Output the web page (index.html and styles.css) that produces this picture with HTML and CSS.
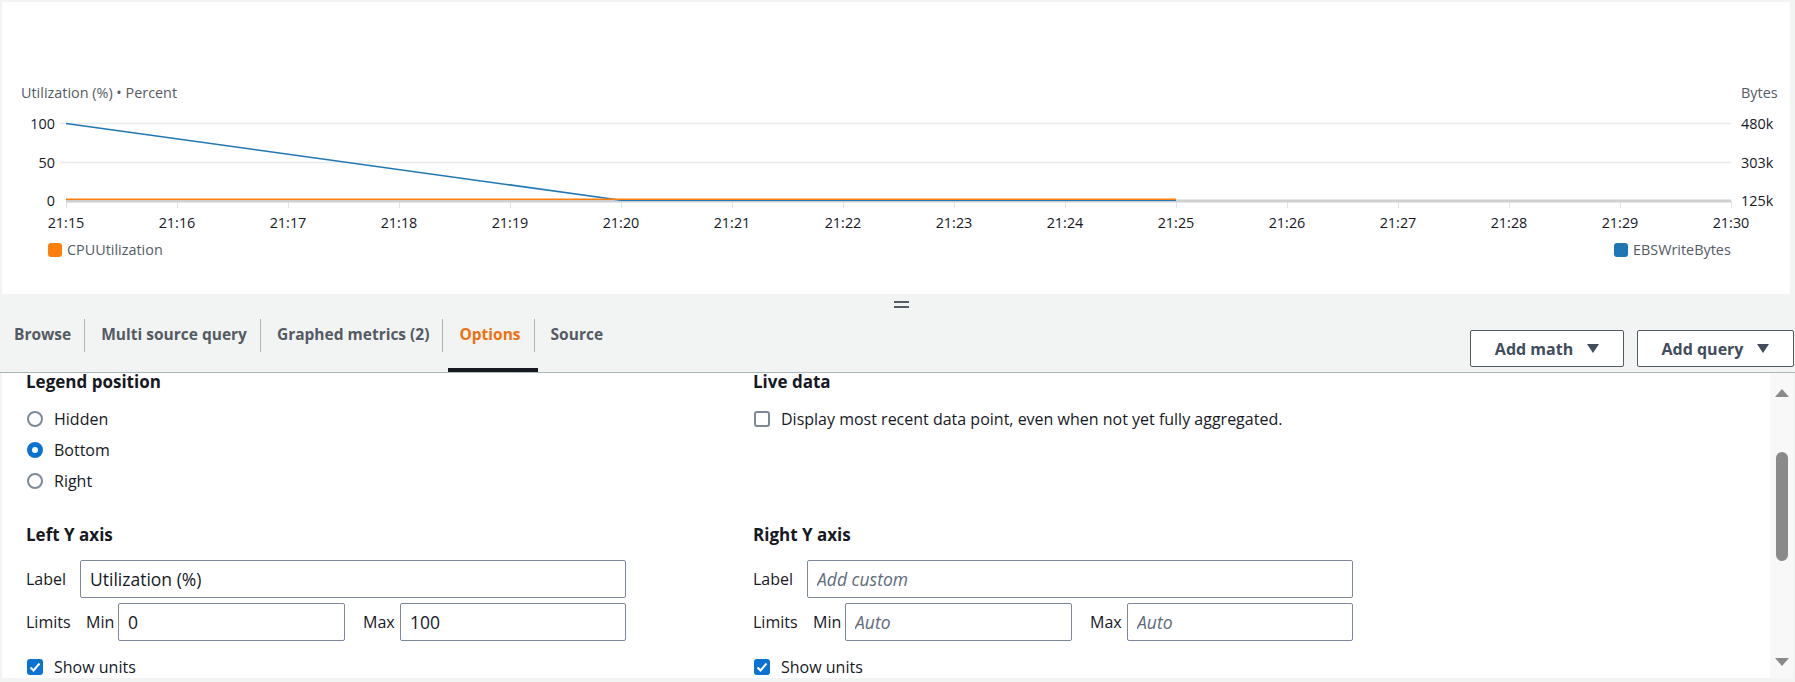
FILE: index.html
```html
<!DOCTYPE html>
<html lang="en">
<head>
<meta charset="utf-8">
<title>Metrics graph options</title>
<link rel="stylesheet" href="styles.css">
</head>
<body>
<div class="page">
  <section class="chart">
    <svg class="chart-svg" width="1788" height="292" viewBox="2 2 1788 292" xmlns="http://www.w3.org/2000/svg">
      <text class="axis-title" x="21" y="97.5">Utilization (%) • Percent</text>
      <text class="axis-title" x="1741" y="97.5">Bytes</text>

      <line class="grid" x1="60" y1="123.5" x2="1731" y2="123.5"/>
      <line class="grid" x1="60" y1="162.5" x2="1731" y2="162.5"/>

      <text class="axis-label" x="55" y="128.5" text-anchor="end">100</text>
      <text class="axis-label" x="55" y="167.5" text-anchor="end">50</text>
      <text class="axis-label" x="55" y="205.5" text-anchor="end">0</text>
      <text class="axis-label" x="1741" y="128.5">480k</text>
      <text class="axis-label" x="1741" y="167.5">303k</text>
      <text class="axis-label" x="1741" y="205.5">125k</text>

      <g class="ticks">
        <line x1="66.5" y1="201" x2="66.5" y2="208"/>
        <line x1="177.5" y1="201" x2="177.5" y2="208"/>
        <line x1="288.5" y1="201" x2="288.5" y2="208"/>
        <line x1="399.5" y1="201" x2="399.5" y2="208"/>
        <line x1="510.5" y1="201" x2="510.5" y2="208"/>
        <line x1="621.5" y1="201" x2="621.5" y2="208"/>
        <line x1="732.5" y1="201" x2="732.5" y2="208"/>
        <line x1="843.5" y1="201" x2="843.5" y2="208"/>
        <line x1="954.5" y1="201" x2="954.5" y2="208"/>
        <line x1="1065.5" y1="201" x2="1065.5" y2="208"/>
        <line x1="1176.5" y1="201" x2="1176.5" y2="208"/>
        <line x1="1287.5" y1="201" x2="1287.5" y2="208"/>
        <line x1="1398.5" y1="201" x2="1398.5" y2="208"/>
        <line x1="1509.5" y1="201" x2="1509.5" y2="208"/>
        <line x1="1620.5" y1="201" x2="1620.5" y2="208"/>
        <line x1="1731.5" y1="201" x2="1731.5" y2="208"/>
      </g>
      <line class="axis" x1="66" y1="201" x2="1731" y2="201"/>

      <g class="axis-label" text-anchor="middle">
        <text x="66" y="227.5">21:15</text>
        <text x="177" y="227.5">21:16</text>
        <text x="288" y="227.5">21:17</text>
        <text x="399" y="227.5">21:18</text>
        <text x="510" y="227.5">21:19</text>
        <text x="621" y="227.5">21:20</text>
        <text x="732" y="227.5">21:21</text>
        <text x="843" y="227.5">21:22</text>
        <text x="954" y="227.5">21:23</text>
        <text x="1065" y="227.5">21:24</text>
        <text x="1176" y="227.5">21:25</text>
        <text x="1287" y="227.5">21:26</text>
        <text x="1398" y="227.5">21:27</text>
        <text x="1509" y="227.5">21:28</text>
        <text x="1620" y="227.5">21:29</text>
        <text x="1731" y="227.5">21:30</text>
      </g>

      <polyline class="series-blue" points="66,123.5 621,200.3 1176,200.3"/>
      <polyline class="series-orange" points="66,199.3 1176,199.3"/>

      <rect class="swatch-orange" x="48" y="243" width="14" height="14" rx="3"/>
      <text class="legend-text" x="67" y="255">CPUUtilization</text>
      <rect class="swatch-blue" x="1614" y="243" width="14" height="14" rx="3"/>
      <text class="legend-text" x="1633" y="255">EBSWriteBytes</text>
    </svg>
  </section>

  <section class="panel">
    <div class="handle"><span class="handle-bar"></span><span class="handle-bar"></span></div>
    <div class="panel-bar">
      <ul class="tabs">
        <li class="tab"><span class="tab-label">Browse</span></li>
        <li class="tab"><span class="tab-label">Multi source query</span></li>
        <li class="tab"><span class="tab-label">Graphed metrics (2)</span></li>
        <li class="tab tab-active"><span class="tab-label">Options</span></li>
        <li class="tab"><span class="tab-label">Source</span></li>
      </ul>
      <div class="actions">
        <button class="btn btn-math" type="button">Add math <span class="caret"></span></button>
        <button class="btn btn-query" type="button">Add query <span class="caret"></span></button>
      </div>
    </div>
  </section>

  <section class="options">
    <div class="options-body">
      <div class="group">
        <h3 class="group-title">Legend position</h3>
        <div class="choice-list">
          <div class="choice"><span class="radio"></span><span>Hidden</span></div>
          <div class="choice"><span class="radio radio-checked"></span><span>Bottom</span></div>
          <div class="choice"><span class="radio"></span><span>Right</span></div>
        </div>
      </div>
      <div class="group">
        <h3 class="group-title">Live data</h3>
        <div class="choice-list">
          <div class="choice"><span class="checkbox"></span><span>Display most recent data point, even when not yet fully aggregated.</span></div>
        </div>
      </div>

      <div class="group group-axis">
        <h3 class="group-title">Left Y axis</h3>
        <div class="field-row label-row">
          <span class="field-label">Label</span>
          <input class="text-input" type="text" value="Utilization (%)">
        </div>
        <div class="field-row limits-row">
          <span class="field-label">Limits</span>
          <span class="field-label">Min</span>
          <input class="text-input" type="text" value="0">
          <span class="field-label max-label">Max</span>
          <input class="text-input" type="text" value="100">
        </div>
        <div class="choice units-row">
          <span class="checkbox checkbox-checked"><svg viewBox="0 0 16 16" width="16" height="16"><path d="M3.5 8.5 L6.5 11.5 L12.5 4.5" fill="none" stroke="#fff" stroke-width="2"/></svg></span><span>Show units</span>
        </div>
      </div>
      <div class="group group-axis">
        <h3 class="group-title">Right Y axis</h3>
        <div class="field-row label-row">
          <span class="field-label">Label</span>
          <input class="text-input" type="text" placeholder="Add custom">
        </div>
        <div class="field-row limits-row">
          <span class="field-label">Limits</span>
          <span class="field-label">Min</span>
          <input class="text-input" type="text" placeholder="Auto">
          <span class="field-label max-label">Max</span>
          <input class="text-input" type="text" placeholder="Auto">
        </div>
        <div class="choice units-row">
          <span class="checkbox checkbox-checked"><svg viewBox="0 0 16 16" width="16" height="16"><path d="M3.5 8.5 L6.5 11.5 L12.5 4.5" fill="none" stroke="#fff" stroke-width="2"/></svg></span><span>Show units</span>
        </div>
      </div>
    </div>
    <div class="scrollbar">
      <span class="scroll-up"></span>
      <span class="scroll-thumb"></span>
      <span class="scroll-down"></span>
    </div>
  </section>
</div>
</body>
</html>
```

FILE: styles.css
```css
* { box-sizing: border-box; }

body {
  margin: 0;
  background: #f2f3f3;
  font-family: "Open Sans", "Noto Sans", sans-serif;
  color: #16191f;
  font-size: 16px;
}

.page {
  width: 1795px;
  height: 682px;
  overflow: hidden;
}

/* ---------- chart ---------- */
.chart {
  margin: 2px 5px 0 2px;
  height: 292px;
  background: #fff;
}

.chart-svg { display: block; }

.axis-title {
  font-family: "Open Sans", sans-serif;
  font-size: 14.4px;
  fill: #545b64;
}

.axis-label, .axis-label text {
  font-family: "Open Sans", sans-serif;
  font-size: 14.4px;
  fill: #16191f;
}

.legend-text {
  font-family: "Open Sans", sans-serif;
  font-size: 14.4px;
  fill: #545b64;
}

.grid { stroke: #e9ebed; stroke-width: 1.5; }
.ticks line { stroke: #e1e3e5; stroke-width: 1; }
.axis { stroke: #cfcfcf; stroke-width: 3; }
.series-blue { fill: none; stroke: #1f77b4; stroke-width: 1.6; }
.series-orange { fill: none; stroke: #ff7f0e; stroke-width: 1.6; }
.swatch-orange { fill: #ff7f0e; }
.swatch-blue { fill: #1f77b4; }

/* ---------- tab panel ---------- */
.panel {
  background: #f2f3f3;
  height: 79px;
}

.handle {
  height: 20px;
  padding-top: 7px;
  padding-left: 8px;
  display: flex;
  flex-direction: column;
  align-items: center;
  gap: 3px;
}

.handle-bar {
  display: block;
  width: 15px;
  height: 2px;
  background: #545b64;
}

.panel-bar {
  height: 59px;
  display: flex;
  justify-content: space-between;
  border-bottom: 1px solid #aab7b8;
}

.tabs {
  list-style: none;
  margin: 0;
  padding: 0;
  display: flex;
}

.tab {
  position: relative;
  padding-top: 5px;
}

.tab-label {
  display: block;
  padding: 4px 13px 7px 14px;
  line-height: 22px;
  font-weight: 700;
  font-size: 15.5px;
  color: #545b64;
}

.tab + .tab .tab-label {
  border-left: 1px solid #aab7b8;
  padding-left: 16px;
}

.tab-active .tab-label { color: #ec7211; }

.tab-active::after {
  content: "";
  position: absolute;
  left: 6px;
  right: -4px;
  bottom: 0;
  height: 4px;
  background: #16191f;
}

.actions {
  display: flex;
  gap: 13px;
  padding-top: 16px;
  padding-right: 1px;
}

.btn {
  height: 37px;
  display: flex;
  align-items: center;
  justify-content: center;
  gap: 14px;
  background: #fff;
  border: 1px solid #545b64;
  border-radius: 2px;
  font-family: "Open Sans", "Noto Sans", sans-serif;
  font-weight: 700;
  font-size: 16px;
  color: #414d5c;
  padding: 0;
}

.btn-math { width: 154px; }
.btn-query { width: 157px; }

.caret {
  width: 0;
  height: 0;
  border-left: 6px solid transparent;
  border-right: 6px solid transparent;
  border-top: 9px solid #414d5c;
}

/* ---------- options ---------- */
.options {
  margin: 0 2px 0 2px;
  height: 305px;
  background: #fff;
  display: flex;
}

.options-body {
  flex: 1;
  padding-left: 24px;
  display: grid;
  grid-template-columns: 727px 600px;
  grid-template-rows: auto auto;
  align-content: start;
}

.group-title {
  margin: -1px 0 0;
  font-size: 17px;
  line-height: 20px;
  font-weight: 700;
  color: #16191f;
}

.choice-list {
  margin-top: 11px;
}

.choice {
  height: 31px;
  display: flex;
  align-items: center;
  gap: 11px;
  font-size: 16px;
}

.radio {
  width: 16px;
  height: 16px;
  border-radius: 50%;
  border: 2px solid #7d8998;
  background: #fff;
  flex: none;
  margin-left: 1px;
}

.radio-checked {
  border: 5px solid #0972d3;
}

.checkbox {
  width: 16px;
  height: 16px;
  border-radius: 3px;
  border: 2px solid #7d8998;
  background: #fff;
  flex: none;
  margin-left: 1px;
  display: flex;
}

.checkbox-checked {
  border: none;
  background: #0972d3;
}

.group-axis {
  margin-top: 30px;
}

.field-row {
  display: grid;
  align-items: center;
  height: 38px;
  width: 600px;
}

.label-row {
  margin-top: 15px;
  grid-template-columns: 54px 1fr;
}

.limits-row {
  margin-top: 5px;
  grid-template-columns: 60px 32px 227px 55px 1fr;
}

.max-label { padding-left: 18px; }

.field-label { font-size: 16px; }

.text-input {
  height: 38px;
  width: 100%;
  border: 1px solid #7d8998;
  border-radius: 2px;
  padding: 0 9px;
  font-family: "Open Sans", "Noto Sans", sans-serif;
  font-size: 17.5px;
  color: #16191f;
  background: #fff;
}

.text-input::placeholder {
  font-style: italic;
  color: #5f6b7a;
}

.units-row {
  margin-top: 10px;
  height: 32px;
}

/* ---------- scrollbar ---------- */
.scrollbar {
  width: 23px;
  flex: none;
  background: #f8f8f8;
  display: flex;
  flex-direction: column;
  align-items: center;
  padding-top: 16px;
}

.scroll-up {
  width: 0;
  height: 0;
  border-left: 7px solid transparent;
  border-right: 7px solid transparent;
  border-bottom: 8px solid #8a8a8a;
}

.scroll-thumb {
  margin-top: 55px;
  width: 12px;
  height: 109px;
  border-radius: 6px;
  background: #8a8a8a;
}

.scroll-down {
  margin-top: 97px;
  width: 0;
  height: 0;
  border-left: 7px solid transparent;
  border-right: 7px solid transparent;
  border-top: 8px solid #8a8a8a;
}
```
